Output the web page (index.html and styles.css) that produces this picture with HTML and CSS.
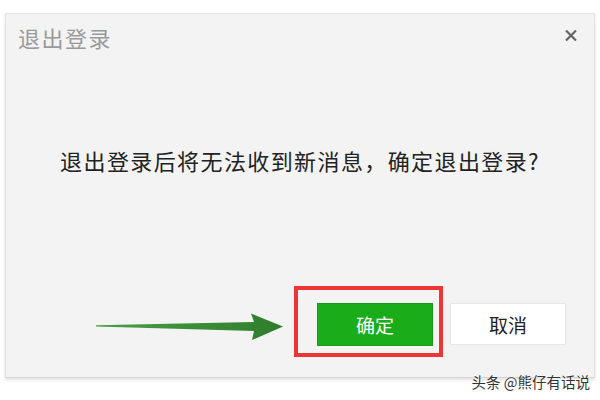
FILE: index.html
```html
<!DOCTYPE html>
<html lang="zh-CN">
<head>
<meta charset="utf-8">
<title>退出登录</title>
<link rel="stylesheet" href="styles.css">
</head>
<body>
<div class="dialog">
  <div class="header">
    <span class="title">退出登录</span>
    <svg class="close" width="12" height="11" viewBox="0 0 12 11"><path d="M1 0.5 L11 10.5 M11 0.5 L1 10.5" stroke="#666" stroke-width="2.2" fill="none"/></svg>
  </div>
  <div class="message">退出登录后将无法收到新消息，确定退出登录?</div>
  <div class="footer">
    <svg class="arrow" width="188" height="28" viewBox="0 0 188 28">
      <defs>
        <linearGradient id="ag" x1="0" y1="0" x2="1" y2="0">
          <stop offset="0" stop-color="#4a9e45"/>
          <stop offset="1" stop-color="#2f7d2c"/>
        </linearGradient>
      </defs>
      <path d="M0 12.2 L158 9 L155 0.5 L187 13.5 L156 27 L158 18 L0 13.6 Z" fill="url(#ag)"/>
    </svg>
    <div class="highlight">
      <button class="btn btn-primary">确定</button>
    </div>
    <button class="btn btn-default">取消</button>
  </div>
</div>
<div class="watermark">头条 @熊仔有话说</div>
</body>
</html>
```
FILE: styles.css
```css
html, body {
  margin: 0;
  padding: 0;
  background: #ffffff;
  font-family: "Microsoft YaHei", "Noto Sans CJK SC", "Noto Sans", sans-serif;
}
body {
  width: 600px;
  height: 400px;
  position: relative;
  overflow: hidden;
}
.dialog {
  position: relative;
  margin: 13px 0 0 5px;
  width: 590px;
  height: 365px;
  box-sizing: border-box;
  background: #f3f3f3;
  border: 1px solid #e4e4e4;
  border-bottom-color: #d6d6d6;
  box-shadow: 0 2px 3px rgba(0, 0, 0, 0.12);
  display: flex;
  flex-direction: column;
}
.header {
  height: 50px;
  display: flex;
  justify-content: space-between;
  align-items: flex-start;
  padding: 10px 17px 0 12px;
  box-sizing: border-box;
}
.title {
  font-size: 22px;
  line-height: 26px;
  color: #9a9a9a;
  letter-spacing: 1.5px;
}
.close {
  margin-top: 6px;
}
.message {
  margin-top: 83px;
  text-align: center;
  font-size: 22px;
  line-height: 26px;
  color: #222;
  letter-spacing: 1.4px;
}
.footer {
  margin-top: auto;
  display: flex;
  justify-content: flex-end;
  align-items: flex-start;
  padding: 0 28px 20px 0;
}
.arrow {
  margin-top: 27px;
  margin-right: 10px;
}
.highlight {
  border: 4px solid #ee3535;
  padding: 13px 6px 7px 19px;
}
.btn {
  font-family: inherit;
  font-size: 19px;
  border-radius: 0;
  cursor: pointer;
  box-sizing: border-box;
  padding: 0;
}
.btn-primary {
  display: block;
  width: 116px;
  height: 43px;
  background: #1aad19;
  border: 1px solid #179b16;
  color: #fff;
}
.btn-default {
  margin: 17px 0 0 7px;
  width: 116px;
  height: 42px;
  background: #fff;
  border: 1px solid #e6e6e6;
  color: #222;
}
.watermark {
  position: absolute;
  right: 10px;
  top: 372px;
  font-size: 14.5px;
  line-height: 20px;
  color: #333;
  text-shadow: 0 0 2px #fff, 0 0 2px #fff;
}
```
